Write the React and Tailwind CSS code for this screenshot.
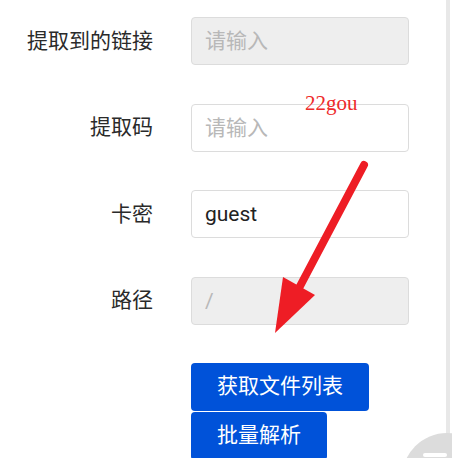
import React from "react";

const fields = [
  { label: "提取到的链接", placeholder: "请输入", value: "", disabled: true },
  { label: "提取码", placeholder: "请输入", value: "", disabled: false },
  { label: "卡密", placeholder: "请输入", value: "guest", disabled: false },
  { label: "路径", placeholder: "/", value: "", disabled: true },
];

const Row = ({ label, placeholder, value, disabled }) => {
  return (
    <div className="flex items-center h-[48px]">
      <div className="w-[153px] text-right text-[21px] text-[#2a2a2a] leading-none">
        {label}
      </div>
      <input
        className={
          disabled
            ? "ml-[38px] w-[218px] h-[48px] rounded-[4px] border border-[#dcdcdc] bg-[#eeeeee] px-[13px] text-[21px] text-[#222] placeholder:text-[#b8b8b8] outline-none"
            : "ml-[38px] w-[218px] h-[48px] rounded-[4px] border border-[#dcdcdc] bg-white px-[13px] text-[21px] text-[#222] placeholder:text-[#b8b8b8] outline-none"
        }
        placeholder={placeholder}
        defaultValue={value}
        disabled={disabled}
      />
    </div>
  );
};

const Arrow = () => {
  return (
    <svg
      className="absolute left-0 top-0 pointer-events-none"
      width="452"
      height="458"
      viewBox="0 0 452 458"
    >
      <line
        x1="364"
        y1="165"
        x2="298"
        y2="290"
        stroke="#ee1d25"
        strokeWidth="8"
        strokeLinecap="round"
      />
      <polygon points="283,277 315,295 275,333" fill="#ee1d25" />
    </svg>
  );
};

export default function App() {
  return (
    <div
      className="relative w-[452px] h-[458px] overflow-hidden bg-white flex"
      style={{ fontFamily: "Roboto, 'Noto Sans CJK SC', sans-serif" }}
    >
      <div className="flex-1 flex flex-col pt-[17px]">
        <div className="flex flex-col gap-[38.5px]">
          {fields.map((f) => (
            <Row key={f.label} {...f} />
          ))}
        </div>
        <div className="flex flex-col items-start pl-[191px] mt-[38px] gap-[1px]">
          <button className="h-[48px] px-[26px] rounded-[4px] bg-[#0052d9] text-white text-[21px] leading-none">
            获取文件列表
          </button>
          <button className="h-[48px] px-[26px] rounded-[4px] bg-[#0052d9] text-white text-[21px] leading-none">
            批量解析
          </button>
        </div>
      </div>
      <div className="w-[4px] mr-[2px] bg-[#e8e8e8]"></div>

      <div
        className="absolute left-[305px] top-[93px] text-[21px] text-[#ee2a2a] leading-none"
        style={{ fontFamily: "'Liberation Serif', serif" }}
      >
        22gou
      </div>

      <Arrow />

      <div className="absolute left-[402px] top-[433px] w-[90px] h-[90px] rounded-full bg-[#dcdcdc]"></div>
      <div className="absolute left-[423px] top-[453px] w-[24px] h-[4px] rounded-full bg-white"></div>
    </div>
  );
}
